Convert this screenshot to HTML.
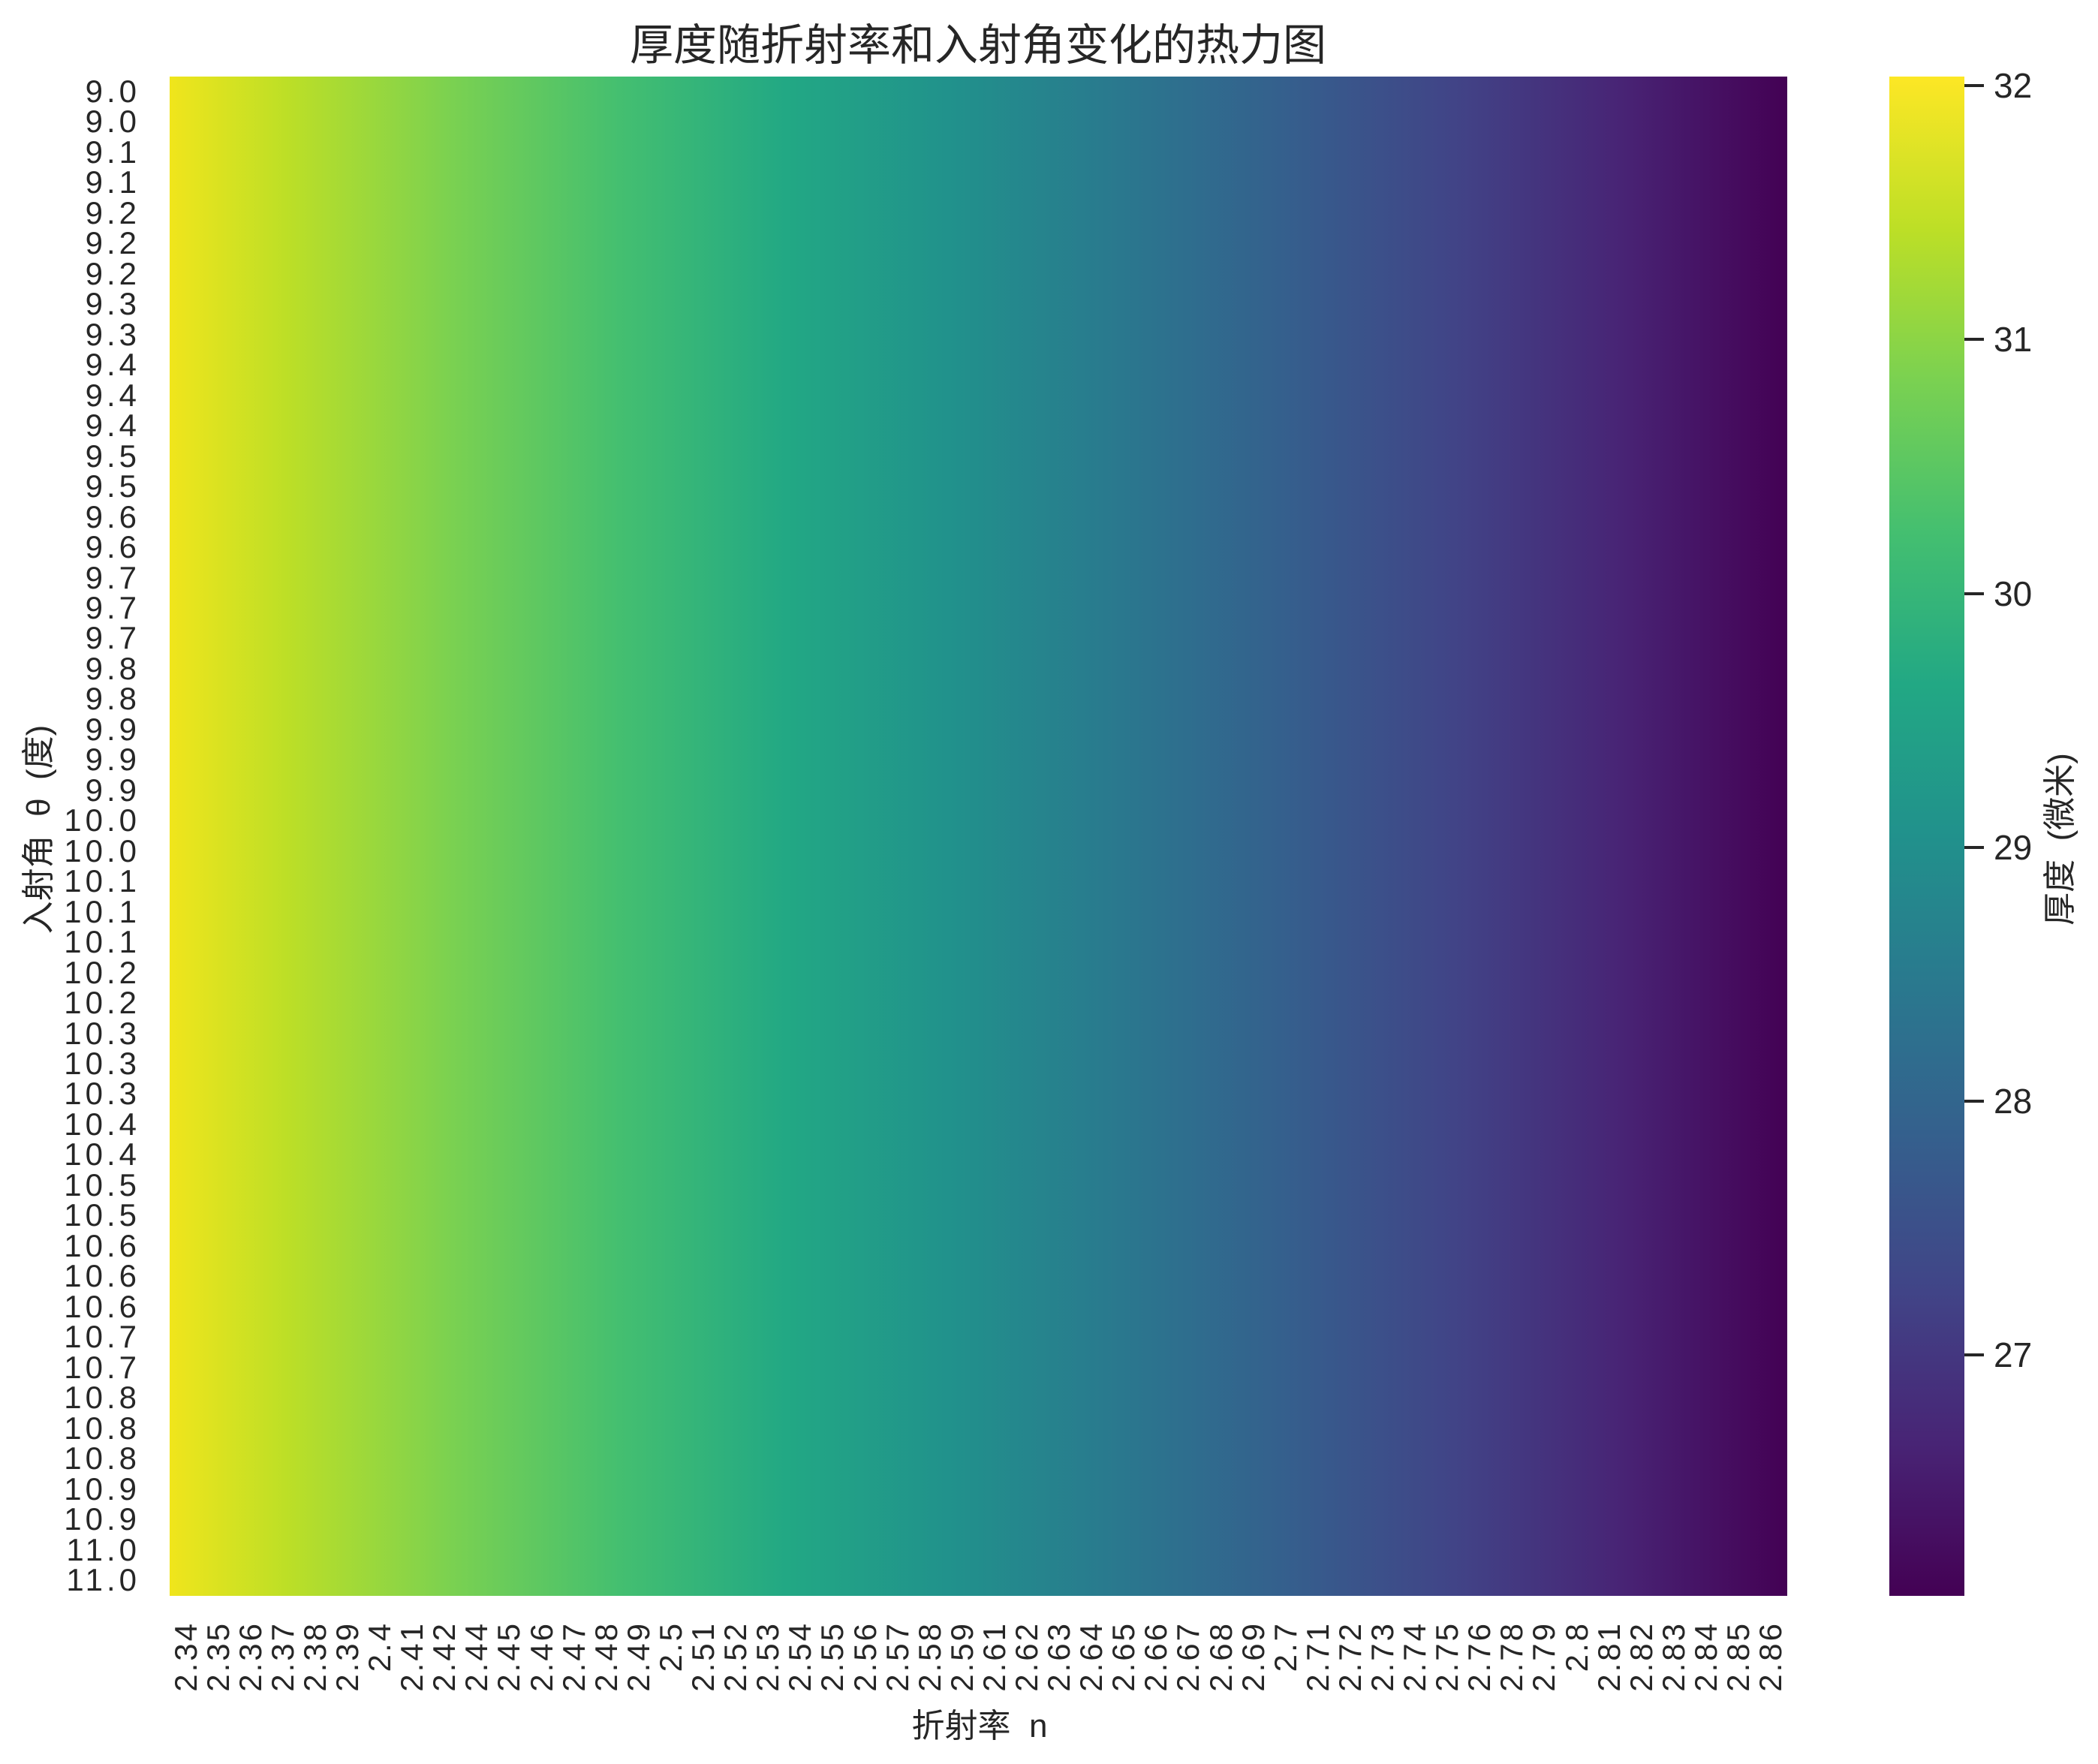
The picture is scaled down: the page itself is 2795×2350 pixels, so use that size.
<!DOCTYPE html>
<html><head><meta charset="utf-8">
<style>
html,body{margin:0;padding:0;background:#fff;}
body{width:2795px;height:2350px;position:relative;overflow:hidden;font-family:"Liberation Sans","Noto Sans CJK SC",sans-serif;color:#262626;}
.abs{position:absolute;}
#hm{left:226px;top:102px;width:2155px;height:2024px;
background:linear-gradient(to left,#440154 0%,#482475 10.3%,#414487 20.6%,#355f8d 30.9%,#2a788e 41.2%,#21918c 51.5%,#22a884 61.9%,#44bf70 72.2%,#7ad151 82.5%,#bddf26 92.8%,#f0e51c 100%);}
#cb{left:2517px;top:102px;width:100px;height:2024px;
background:linear-gradient(to top,#440154 0%,#482475 10%,#414487 20%,#355f8d 30%,#2a788e 40%,#21918c 50%,#22a884 60%,#44bf70 70%,#7ad151 80%,#bddf26 90%,#fde725 100%);}
#yl{left:0;top:102px;width:182px;}
#yl div{height:40.48px;line-height:40.48px;text-align:right;font-size:42px;letter-spacing:5px;margin-right:-5px;}
#xl{left:226px;top:2160px;width:2155px;display:flex;}
#xl div{width:43.1px;display:flex;justify-content:center;align-items:flex-start;height:110px;}
#xl span{writing-mode:vertical-rl;transform:rotate(180deg);font-size:42px;line-height:42px;letter-spacing:3px;}
.tk{left:2617px;width:26px;height:4px;background:#262626;}
.tl{left:2656px;font-size:46px;line-height:46px;}
.cjk{font-family:"Liberation Sans","Noto Sans CJK SC",sans-serif;white-space:pre;}
</style></head><body>
<div class="abs cjk" style="left:803px;width:1000px;top:25px;text-align:center;font-size:58px;line-height:72px;">厚度随折射率和入射角变化的热力图</div>
<div id="hm" class="abs"></div>
<div id="cb" class="abs"></div>
<div id="yl" class="abs">
<div>9.0</div><div>9.0</div><div>9.1</div><div>9.1</div><div>9.2</div><div>9.2</div><div>9.2</div><div>9.3</div><div>9.3</div><div>9.4</div>
<div>9.4</div><div>9.4</div><div>9.5</div><div>9.5</div><div>9.6</div><div>9.6</div><div>9.7</div><div>9.7</div><div>9.7</div><div>9.8</div>
<div>9.8</div><div>9.9</div><div>9.9</div><div>9.9</div><div>10.0</div><div>10.0</div><div>10.1</div><div>10.1</div><div>10.1</div><div>10.2</div>
<div>10.2</div><div>10.3</div><div>10.3</div><div>10.3</div><div>10.4</div><div>10.4</div><div>10.5</div><div>10.5</div><div>10.6</div><div>10.6</div>
<div>10.6</div><div>10.7</div><div>10.7</div><div>10.8</div><div>10.8</div><div>10.8</div><div>10.9</div><div>10.9</div><div>11.0</div><div>11.0</div>
</div>
<div id="xl" class="abs">
<div><span>2.34</span></div><div><span>2.35</span></div><div><span>2.36</span></div><div><span>2.37</span></div><div><span>2.38</span></div><div><span>2.39</span></div><div><span>2.4</span></div><div><span>2.41</span></div><div><span>2.42</span></div><div><span>2.44</span></div>
<div><span>2.45</span></div><div><span>2.46</span></div><div><span>2.47</span></div><div><span>2.48</span></div><div><span>2.49</span></div><div><span>2.5</span></div><div><span>2.51</span></div><div><span>2.52</span></div><div><span>2.53</span></div><div><span>2.54</span></div>
<div><span>2.55</span></div><div><span>2.56</span></div><div><span>2.57</span></div><div><span>2.58</span></div><div><span>2.59</span></div><div><span>2.61</span></div><div><span>2.62</span></div><div><span>2.63</span></div><div><span>2.64</span></div><div><span>2.65</span></div>
<div><span>2.66</span></div><div><span>2.67</span></div><div><span>2.68</span></div><div><span>2.69</span></div><div><span>2.7</span></div><div><span>2.71</span></div><div><span>2.72</span></div><div><span>2.73</span></div><div><span>2.74</span></div><div><span>2.75</span></div>
<div><span>2.76</span></div><div><span>2.78</span></div><div><span>2.79</span></div><div><span>2.8</span></div><div><span>2.81</span></div><div><span>2.82</span></div><div><span>2.83</span></div><div><span>2.84</span></div><div><span>2.85</span></div><div><span>2.86</span></div>
</div>
<div class="abs cjk" style="left:1105px;width:400px;top:2272px;text-align:center;font-size:44px;line-height:56px;">折射率  n</div>
<div class="abs cjk" style="left:52px;top:1105px;width:0;height:0;">
<div style="position:absolute;left:0;top:0;transform:translate(-50%,-50%) rotate(-90deg);white-space:pre;font-size:44px;line-height:50px;">入射角  θ  (度)</div></div>
<div class="abs cjk" style="left:2745px;top:1118px;width:0;height:0;">
<div style="position:absolute;left:0;top:0;transform:translate(-50%,-50%) rotate(-90deg);white-space:pre;font-size:44px;line-height:50px;">厚度  (微米)</div></div>
<div class="abs tk" style="top:112px"></div><div class="abs tl" style="top:91px">32</div>
<div class="abs tk" style="top:450px"></div><div class="abs tl" style="top:429px">31</div>
<div class="abs tk" style="top:789px"></div><div class="abs tl" style="top:768px">30</div>
<div class="abs tk" style="top:1127px"></div><div class="abs tl" style="top:1106px">29</div>
<div class="abs tk" style="top:1465px"></div><div class="abs tl" style="top:1444px">28</div>
<div class="abs tk" style="top:1803px"></div><div class="abs tl" style="top:1782px">27</div>
</body></html>
